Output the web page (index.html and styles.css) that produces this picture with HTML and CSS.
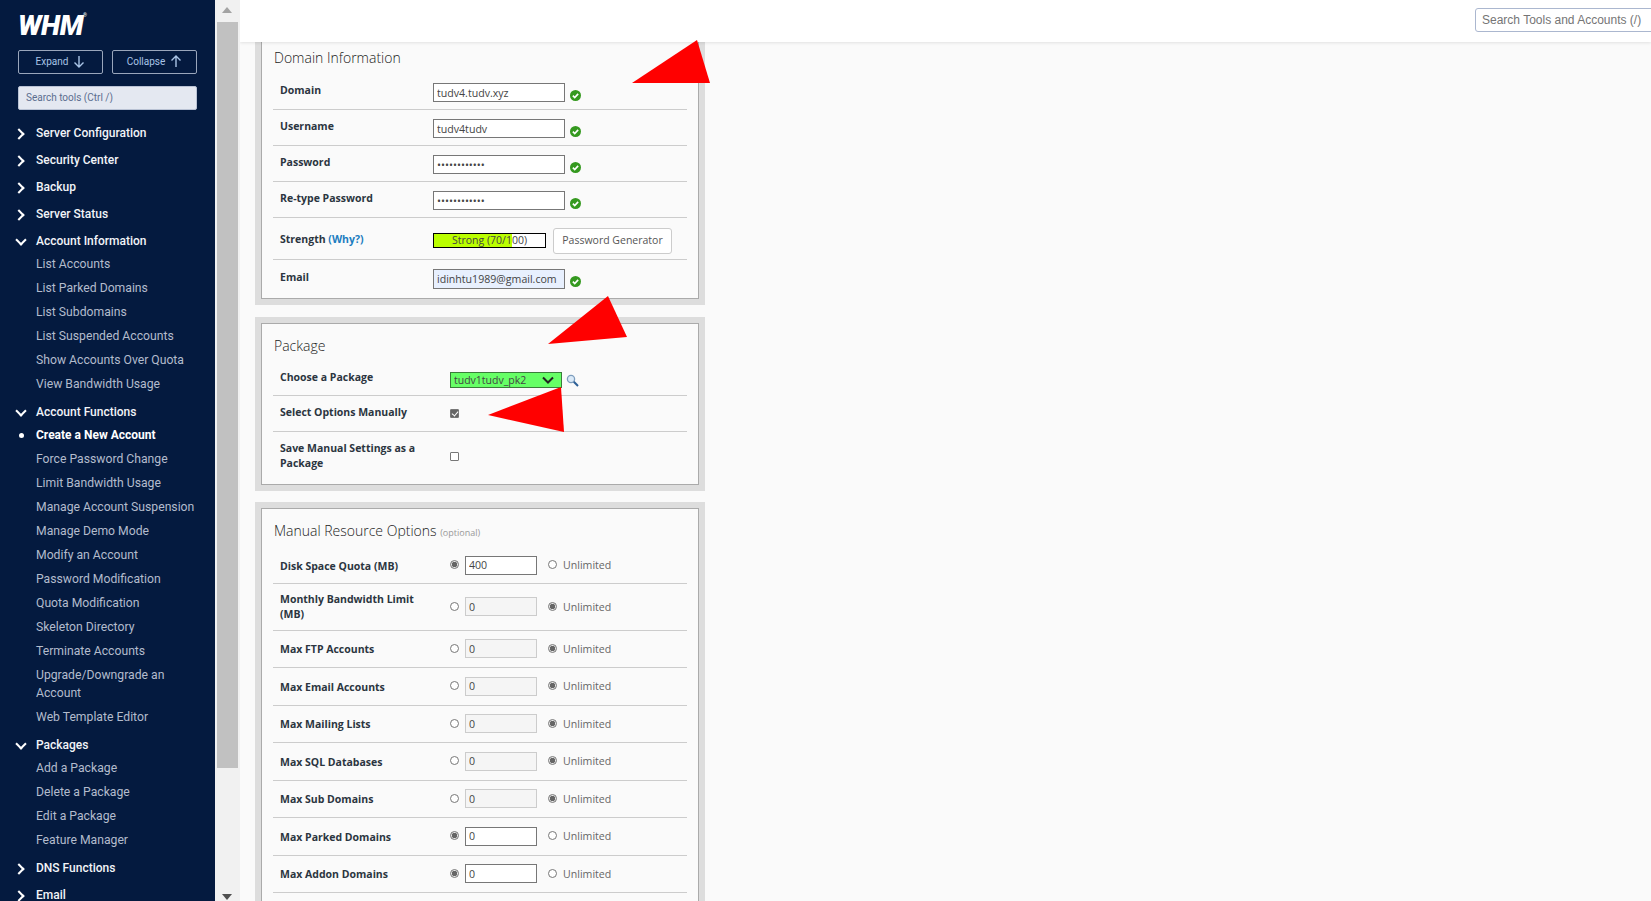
FILE: index.html
```html
<!DOCTYPE html>
<html lang="en">
<head>
    <meta charset="UTF-8">
    <title>WHM - Create a New Account</title>
    <link rel="stylesheet" href="styles.css">
</head>
<body>
    <aside class="sidebar">
        <div class="logo">WHM<sup>®</sup></div>
        <div class="tree-buttons">
            <button type="button">Expand
                <svg width="12" height="13" viewBox="0 0 12 13"><path d="M6 1v11M1.5 7.5 6 12l4.500-4.500" /></svg>
            </button>
            <button type="button">Collapse
                <svg width="12" height="13" viewBox="0 0 12 13"><path d="M6 12V1M1.5 5.500 6 1l4.500 4.500" /></svg>
            </button>
        </div>
        <input class="tool-search" type="text" placeholder="Search tools (Ctrl /)">

        <div class="group closed"><div class="group-title">Server Configuration</div></div>
        <div class="group closed"><div class="group-title">Security Center</div></div>
        <div class="group closed"><div class="group-title">Backup</div></div>
        <div class="group closed"><div class="group-title">Server Status</div></div>
        <div class="group open">
            <div class="group-title">Account Information</div>
            <a>List Accounts</a>
            <a>List Parked Domains</a>
            <a>List Subdomains</a>
            <a>List Suspended Accounts</a>
            <a>Show Accounts Over Quota</a>
            <a>View Bandwidth Usage</a>
        </div>
        <div class="group open">
            <div class="group-title">Account Functions</div>
            <a class="current">Create a New Account</a>
            <a>Force Password Change</a>
            <a>Limit Bandwidth Usage</a>
            <a>Manage Account Suspension</a>
            <a>Manage Demo Mode</a>
            <a>Modify an Account</a>
            <a>Password Modification</a>
            <a>Quota Modification</a>
            <a>Skeleton Directory</a>
            <a>Terminate Accounts</a>
            <a>Upgrade/Downgrade an Account</a>
            <a>Web Template Editor</a>
        </div>
        <div class="group open">
            <div class="group-title">Packages</div>
            <a>Add a Package</a>
            <a>Delete a Package</a>
            <a>Edit a Package</a>
            <a>Feature Manager</a>
        </div>
        <div class="group closed"><div class="group-title">DNS Functions</div></div>
        <div class="group closed"><div class="group-title">Email</div></div>
    </aside>

    <div class="side-scroll">
        <span class="arrow-up"></span>
        <span class="thumb"></span>
        <span class="arrow-down"></span>
    </div>

    <div class="main">
        <header class="topbar">
            <input type="text" placeholder="Search Tools and Accounts (/)">
        </header>

        <div class="content">
            <section class="panel first">
                <div class="panel-inner">
                    <h2>Domain Information</h2>
                    <div class="row info top">
                        <label>Domain</label>
                        <input type="text" value="tudv4.tudv.xyz">
                        <svg class="ok" viewBox="0 0 10 10"><circle cx="5" cy="5" r="5" /><path d="M2.600 5.100 4.300 6.800 7.400 3.500" /></svg>
                    </div>
                    <div class="row info">
                        <label>Username</label>
                        <input type="text" value="tudv4tudv">
                        <svg class="ok" viewBox="0 0 10 10"><circle cx="5" cy="5" r="5" /><path d="M2.600 5.100 4.300 6.800 7.400 3.500" /></svg>
                    </div>
                    <div class="row info">
                        <label>Password</label>
                        <input type="password" value="abcdefghijkl">
                        <svg class="ok" viewBox="0 0 10 10"><circle cx="5" cy="5" r="5" /><path d="M2.600 5.100 4.300 6.800 7.400 3.500" /></svg>
                    </div>
                    <div class="row info">
                        <label>Re-type Password</label>
                        <input type="password" value="abcdefghijkl">
                        <svg class="ok" viewBox="0 0 10 10"><circle cx="5" cy="5" r="5" /><path d="M2.600 5.100 4.300 6.800 7.400 3.500" /></svg>
                    </div>
                    <div class="row strength">
                        <label>Strength <a>(Why?)</a></label>
                        <div class="meter">
                            <div class="meter-fill" style="width: 70%"></div>
                            <span>Strong (70/100)</span>
                        </div>
                        <button type="button" class="gen-btn">Password Generator</button>
                    </div>
                    <div class="row info last">
                        <label>Email</label>
                        <input class="autofilled" type="text" value="idinhtu1989@gmail.com">
                        <svg class="ok" viewBox="0 0 10 10"><circle cx="5" cy="5" r="5" /><path d="M2.600 5.100 4.300 6.800 7.400 3.500" /></svg>
                    </div>
                </div>
            </section>

            <section class="panel">
                <div class="panel-inner">
                    <h2>Package</h2>
                    <div class="row pack choose">
                        <label>Choose a Package</label>
                        <div class="select-wrap">
                            <select><option>tudv1tudv_pk2</option></select>
                            <svg width="12" height="8" viewBox="0 0 12 8"><path d="M1 1.500 6 6.500 11 1.500" /></svg>
                        </div>
                        <svg class="lens" width="13" height="13" viewBox="0 0 13 13">
                            <circle cx="5" cy="5" r="3.600" />
                            <path d="M7.800 7.800 12 12" />
                        </svg>
                    </div>
                    <div class="row pack manual">
                        <label>Select Options Manually</label>
                        <input class="check" type="checkbox" checked>
                    </div>
                    <div class="row pack save last">
                        <label>Save Manual Settings as a Package</label>
                        <input class="check" type="checkbox">
                    </div>
                </div>
            </section>

            <section class="panel">
                <div class="panel-inner long">
                    <h2>Manual Resource Options <small>(optional)</small></h2>
                    <div class="row res first-res">
                        <label>Disk Space Quota (MB)</label>
                        <input class="radio" type="radio" name="r1" checked>
                        <input class="num" type="text" value="400">
                        <input class="radio" type="radio" name="r1">
                        <span class="unl">Unlimited</span>
                    </div>
                    <div class="row res tall">
                        <label>Monthly Bandwidth Limit (MB)</label>
                        <input class="radio" type="radio" name="r2">
                        <input class="num" type="text" value="0" disabled>
                        <input class="radio" type="radio" name="r2" checked>
                        <span class="unl">Unlimited</span>
                    </div>
                    <div class="row res">
                        <label>Max FTP Accounts</label>
                        <input class="radio" type="radio" name="r3">
                        <input class="num" type="text" value="0" disabled>
                        <input class="radio" type="radio" name="r3" checked>
                        <span class="unl">Unlimited</span>
                    </div>
                    <div class="row res">
                        <label>Max Email Accounts</label>
                        <input class="radio" type="radio" name="r4">
                        <input class="num" type="text" value="0" disabled>
                        <input class="radio" type="radio" name="r4" checked>
                        <span class="unl">Unlimited</span>
                    </div>
                    <div class="row res">
                        <label>Max Mailing Lists</label>
                        <input class="radio" type="radio" name="r5">
                        <input class="num" type="text" value="0" disabled>
                        <input class="radio" type="radio" name="r5" checked>
                        <span class="unl">Unlimited</span>
                    </div>
                    <div class="row res">
                        <label>Max SQL Databases</label>
                        <input class="radio" type="radio" name="r6">
                        <input class="num" type="text" value="0" disabled>
                        <input class="radio" type="radio" name="r6" checked>
                        <span class="unl">Unlimited</span>
                    </div>
                    <div class="row res">
                        <label>Max Sub Domains</label>
                        <input class="radio" type="radio" name="r7">
                        <input class="num" type="text" value="0" disabled>
                        <input class="radio" type="radio" name="r7" checked>
                        <span class="unl">Unlimited</span>
                    </div>
                    <div class="row res">
                        <label>Max Parked Domains</label>
                        <input class="radio" type="radio" name="r8" checked>
                        <input class="num" type="text" value="0">
                        <input class="radio" type="radio" name="r8">
                        <span class="unl">Unlimited</span>
                    </div>
                    <div class="row res">
                        <label>Max Addon Domains</label>
                        <input class="radio" type="radio" name="r9" checked>
                        <input class="num" type="text" value="0">
                        <input class="radio" type="radio" name="r9">
                        <span class="unl">Unlimited</span>
                    </div>
                </div>
            </section>
        </div>
    </div>

    <!-- red arrows someone painted on the screenshot -->
    <svg class="marks" width="1651" height="901" viewBox="0 0 1651 901">
        <polygon points="632,83 697,40 710,83" />
        <polygon points="548,344 608,296 627,337" />
        <polygon points="488,415 561,387 564,432" />
    </svg>
</body>
</html>
```

FILE: styles.css
```css
* {
    box-sizing: border-box;
}
html, body {
    height: 100%;
}
body {
    margin: 0;
    display: flex;
    height: 901px;
    overflow: hidden;
    background-color: #fafafa;
    font-family: "Open Sans", Arial, sans-serif;
    font-size: 12px;
    color: #333;
}

/* sidebar */
.sidebar {
    width: 215px;
    flex: none;
    padding: 0 18px;
    background-color: #041a3f;
    font-family: Roboto, Arial, sans-serif;
    color: #fff;
    overflow: hidden;
}
.logo {
    height: 50px;
    padding-top: 11px;
    font-size: 28px;
    line-height: 30px;
    font-weight: 900;
    font-style: italic;
    letter-spacing: -0.500px;
}
.logo sup {
    font-size: 5px;
    font-weight: 400;
    font-style: normal;
    vertical-align: 18px;
    line-height: 0;
}
.tree-buttons {
    display: flex;
    justify-content: space-between;
}
.tree-buttons button {
    width: 85px;
    height: 24px;
    padding: 0 0 1px;
    display: flex;
    align-items: center;
    justify-content: center;
    gap: 5px;
    background: transparent;
    border: 1px solid #9aa6bb;
    border-radius: 2px;
    color: #a9c4e6;
    font-family: Roboto, Arial, sans-serif;
    font-size: 10px;
}
.tree-buttons svg {
    fill: none;
    stroke: #a9c4e6;
    stroke-width: 1.4;
}
.tool-search {
    display: block;
    width: 179px;
    height: 24px;
    margin: 12px 0 11px;
    padding: 0 7px 1px;
    background-color: #e4e8f1;
    border: 1px solid #b9c2d4;
    border-radius: 2px;
    font-family: Roboto, Arial, sans-serif;
    font-size: 10px;
}
.tool-search::placeholder {
    color: #5b6d8f;
    opacity: 1;
}
.group {
    margin-bottom: 3px;
}
.group-title {
    position: relative;
    height: 24px;
    padding-left: 18px;
    line-height: 24px;
    font-size: 12px;
    font-weight: 500;
    color: #f2f4f8;
}
.group-title::before {
    content: "";
    position: absolute;
    width: 6px;
    height: 6px;
    border-top: 2px solid #fff;
    border-right: 2px solid #fff;
}
.closed .group-title::before {
    left: -3px;
    top: 9px;
    transform: rotate(45deg);
}
.open .group-title::before {
    left: -1px;
    top: 7px;
    transform: rotate(135deg);
}
.group a {
    display: block;
    padding: 2px 0 4px 18px;
    line-height: 18px;
    font-size: 12.200px;
    color: #b3bccd;
}
.group a.current {
    position: relative;
    font-size: 12px;
    font-weight: 700;
    color: #fff;
}
.group a.current::before {
    content: "";
    position: absolute;
    left: 1px;
    top: 9px;
    width: 5px;
    height: 5px;
    border-radius: 50%;
    background-color: #fff;
}

/* the sidebar's own scrollbar */
.side-scroll {
    position: relative;
    width: 25px;
    flex: none;
    background-color: #f1f1f1;
    padding: 22px 2px 0;
}
.thumb {
    display: block;
    width: 21px;
    height: 746px;
    background-color: #c1c1c1;
}
.arrow-up, .arrow-down {
    position: absolute;
    left: 7px;
    width: 0;
    height: 0;
    border-left: 5.500px solid transparent;
    border-right: 5.500px solid transparent;
}
.arrow-up {
    top: 7px;
    border-bottom: 6px solid #a3a3a3;
}
.arrow-down {
    bottom: 1px;
    border-top: 6px solid #505050;
}

/* main area */
.main {
    flex: 1;
    min-width: 0;
    height: 901px;
    overflow: hidden;
}
.topbar {
    position: relative;
    z-index: 2;
    height: 42px;
    padding-top: 8px;
    display: flex;
    justify-content: flex-end;
    background-color: #fff;
    box-shadow: 0 1px 3px rgba(0, 0, 0, 0.1);
    overflow: hidden;
}
.topbar input {
    width: 180px;
    height: 24px;
    margin-right: -4px;
    padding: 0 6px;
    border: 1px solid #abb7cf;
    border-radius: 3px;
    font-family: "Liberation Sans", Arial, sans-serif;
    font-size: 12px;
}
.topbar input::placeholder {
    color: #757575;
    opacity: 1;
}
.content {
    padding: 0 0 0 15px;
}
.panel {
    width: 450px;
    margin-bottom: 11px;
    border: 6px solid #ddd;
}
.panel.first {
    margin-top: -13px;
    margin-bottom: 12px;
}
.panel-inner {
    padding: 0 11px;
    border: 1px solid #aaa;
}
.panel-inner.long {
    padding-bottom: 40px;
}
h2 {
    margin: 0;
    height: 37px;
    padding: 12px 0 0 1px;
    font-size: 14px;
    line-height: 20px;
    font-weight: 300;
    color: #222;
}
h2 small {
    font-size: 9px;
    font-weight: 400;
    color: #999;
}
.row {
    display: flex;
    border-bottom: 1px solid #ccc;
    padding-left: 7px;
}
.row.last {
    border-bottom: none;
}
.row label {
    flex: none;
    font-size: 10.500px;
    line-height: 15px;
    font-weight: 700;
    color: #2b3540;
}
.row label a {
    color: #1b7dc0;
}

/* domain information rows */
.info {
    height: 36px;
    padding-top: 9px;
}
.info.top {
    height: 37px;
    padding-top: 10px;
}
.info.last {
    height: 38px;
}
.info label, .strength label {
    width: 153px;
}
.info.last label {
    margin-top: 1px;
}
.info input {
    width: 132px;
    height: 19px;
    padding: 0 3px;
    border: 1px solid #777;
    background-color: #fff;
    font-family: "Open Sans", Arial, sans-serif;
    font-size: 10.600px;
    color: #444;
}
.info input.autofilled {
    height: 20px;
    background-color: #e8f0fe;
}
.ok {
    width: 11px;
    height: 11px;
    margin: 7px 0 0 5px;
}
.ok circle {
    fill: #35991f;
}
.ok path {
    fill: none;
    stroke: #fff;
    stroke-width: 1.500;
}
.strength {
    height: 42px;
    padding-top: 10px;
    align-items: flex-start;
}
.strength label {
    margin-top: 4px;
}
.meter {
    position: relative;
    width: 113px;
    height: 15px;
    margin-top: 5px;
    border: 1px solid #000;
    background-color: #fff;
    text-align: center;
    line-height: 13px;
    font-size: 10.500px;
    color: #444;
}
.meter-fill {
    position: absolute;
    left: 0;
    top: 0;
    bottom: 0;
    background-color: #bf0;
}
.meter span {
    position: relative;
}
.gen-btn {
    width: 119px;
    height: 26px;
    margin-left: 7px;
    padding: 0 0 2px;
    background-color: #fff;
    border: 1px solid #ccc;
    border-radius: 3px;
    font-family: "Open Sans", Arial, sans-serif;
    font-size: 10.500px;
    color: #555;
}

/* package rows */
.pack {
    height: 36px;
    align-items: center;
}
.pack label, .res label {
    width: 170px;
    padding-right: 12px;
}
.res label {
    padding-right: 20px;
}
.pack.choose {
    height: 35px;
    padding-top: 10px;
    align-items: flex-start;
}
.pack.choose label {
    margin-top: -1px;
}
.pack.manual label {
    margin-bottom: 3px;
}
.pack.save {
    height: 52px;
}
.pack.save label, .pack.save .check {
    margin-bottom: 4px;
}
.select-wrap {
    position: relative;
    width: 112px;
    height: 16px;
}
.select-wrap select {
    width: 100%;
    height: 100%;
    padding: 0 0 0 3px;
    appearance: none;
    border: 1px solid #3a7d3a;
    border-radius: 0;
    background-color: #6f6;
    font-family: "Open Sans", Arial, sans-serif;
    font-size: 10.500px;
    color: #444;
}
.select-wrap svg {
    position: absolute;
    right: 8px;
    top: 5px;
    fill: none;
    stroke: #222;
    stroke-width: 2;
}
.lens {
    margin-left: 4px;
    margin-top: 3px;
    fill: #dbeaf8;
    stroke: #7d9dbd;
    stroke-width: 1.300;
}
.lens path {
    stroke: #2c5f96;
    stroke-width: 2;
}
.check {
    appearance: none;
    width: 9px;
    height: 9px;
    margin: 0;
    border: 1px solid #777;
    border-radius: 1px;
    background-color: #fff;
}
.check:checked {
    background-color: #666;
    position: relative;
}
.check:checked::after {
    content: "";
    position: absolute;
    left: 2px;
    top: 0;
    width: 3px;
    height: 5px;
    border-right: 1px solid #fff;
    border-bottom: 1px solid #fff;
    transform: rotate(40deg);
}

/* resource rows */
.res {
    height: 37.500px;
    align-items: center;
}
.res.first-res {
    padding-top: 1.500px;
}
.res label {
    margin-top: 2px;
}
.res.tall {
    height: 47px;
}
.res.tall label {
    margin-top: 0;
}
.radio {
    appearance: none;
    flex: none;
    width: 9px;
    height: 9px;
    margin: -1px 0 0;
    border: 1px solid #777;
    border-radius: 50%;
    background-color: #fff;
}
.radio:checked {
    background: radial-gradient(circle, #666 0 2.500px, #e8e8e8 3px);
}
.num {
    width: 72px;
    height: 19px;
    margin: 0 11px 0 6px;
    padding: 0 3px;
    border: 1px solid #777;
    background-color: #fff;
    font-family: "Open Sans", Arial, sans-serif;
    font-size: 10.600px;
    color: #444;
}
.num:disabled {
    border-color: #ccc;
    background-color: #f5f5f5;
}
.unl {
    margin: 0 0 0 6px;
    font-size: 10.600px;
    color: #666;
}

/* painted arrows */
.marks {
    position: absolute;
    left: 0;
    top: 0;
    z-index: 5;
    pointer-events: none;
    fill: #f00;
}
```
